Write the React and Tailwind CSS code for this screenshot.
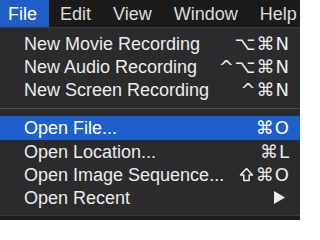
import React from 'react';

const menus = ['File', 'Edit', 'View', 'Window', 'Help'];

const groups = [
  [
    { label: 'New Movie Recording', keys: '⌥⌘N' },
    { label: 'New Audio Recording', keys: '^⌥⌘N' },
    { label: 'New Screen Recording', keys: '^⌘N' },
  ],
  [
    { label: 'Open File...', keys: '⌘O', active: true },
    { label: 'Open Location...', keys: '⌘L' },
    { label: 'Open Image Sequence...', keys: '⇧⌘O', shift: true },
    { label: 'Open Recent', arrow: true },
  ],
];

// outline shift arrow, the font one comes out too small
const ShiftIcon = () => (
  <svg width="15" height="15" viewBox="0 0 15 15" className="mr-[2px]">
    <path d="M7.5 1.5 L13.5 8 H10.2 V13.5 H4.8 V8 H1.5 Z" fill="none" stroke="#ececec" strokeWidth="1.5" strokeLinejoin="round" />
  </svg>
);

const MenuRow = ({ item }) => (
  <div
    className={`flex items-center justify-between pl-[24px] pr-[10px] ${
      item.active ? 'h-[24px] bg-[#1c5fcd] text-white' : 'h-[23px] text-[#ececec]'
    }`}
  >
    <span>{item.label}</span>
    {item.arrow ? (
      <svg width="11" height="13" viewBox="0 0 11 13" className="mr-[5px]">
        <path d="M0 0 L11 6.5 L0 13 Z" fill="#ececec" />
      </svg>
    ) : (
      <span className="flex items-center tracking-[1px] font-['DejaVu_Sans',sans-serif] text-[18px]">
        {item.shift ? (
          <>
            <ShiftIcon />
            {item.keys.slice(1)}
          </>
        ) : (
          item.keys
        )}
      </span>
    )}
  </div>
);

const App = () => {
  return (
    <div className="w-[300px] h-[220px] bg-[#1d1d1f] overflow-hidden font-['Liberation_Sans',Arial,sans-serif] text-[18px] leading-none">
      <div className="flex h-[27px] items-center bg-[#1b1b1b] text-[#dcdcdc]">
        {menus.map((m, i) => (
          <div
            key={m}
            className={`h-full flex items-center ${
              i === 0 ? 'pl-[8px] pr-[12px] bg-[#1f5ec6] text-white' : 'px-[11px]'
            }`}
          >
            {m}
          </div>
        ))}
      </div>
      <div className="bg-[#2b2b2d] border-t border-[#3a3a3c] pt-[4px] pb-[6px] border-b">
        {groups.map((g, gi) => (
          <React.Fragment key={gi}>
            {gi > 0 && (
              <div className="py-[7px]">
                <div className="h-px bg-[#4a4a4c]" />
              </div>
            )}
            {g.map((item) => (
              <MenuRow key={item.label} item={item} />
            ))}
          </React.Fragment>
        ))}
      </div>
    </div>
  );
};

export default App;
